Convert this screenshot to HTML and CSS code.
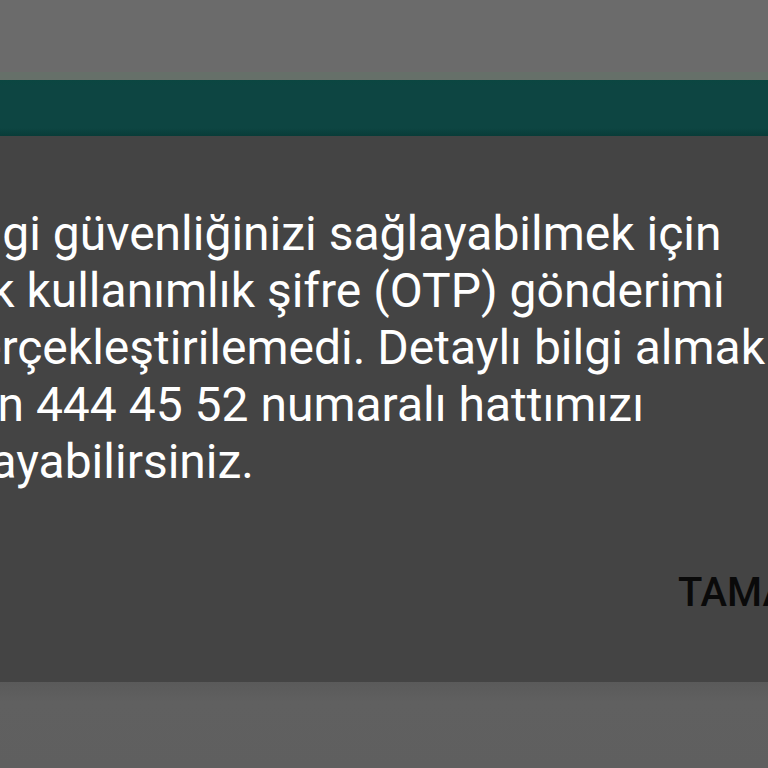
FILE: index.html
```html
<!DOCTYPE html>
<html lang="tr">
<head>
<meta charset="utf-8">
<link rel="stylesheet" href="styles.css">
</head>
<body>
<div class="screen">
  <div class="scrim-top"></div>
  <div class="scrim-strip"></div>
  <div class="dialog">
    <div class="titlebar"></div>
    <div class="content">
      <p class="message">
        <span class="line">Bilgi güvenliğinizi sağlayabilmek için</span>
        <span class="line">tek kullanımlık şifre (OTP) gönderimi</span>
        <span class="line">gerçekleştirilemedi. Detaylı bilgi almak</span>
        <span class="line">için 444 45 52 numaralı hattımızı</span>
        <span class="line">arayabilirsiniz.</span>
      </p>
    </div>
    <div class="actions">
      <span class="btn">TAMAM</span>
    </div>
  </div>
  <div class="scrim-bottom"></div>
</div>
</body>
</html>
```
FILE: styles.css
```css
html, body {
  margin: 0;
  padding: 0;
}
body {
  width: 768px;
  height: 768px;
  overflow: hidden;
  background: #6b6b6b;
  font-family: Roboto, "Noto Sans", sans-serif;
}
.screen {
  width: 768px;
  height: 768px;
  display: flex;
  flex-direction: column;
  overflow: hidden;
}
.scrim-top {
  height: 72px;
  background: #6b6b6b;
  flex: none;
}
.scrim-strip {
  height: 8px;
  background: #667069;
  flex: none;
}
.dialog {
  flex: none;
  height: 602px;
  display: flex;
  flex-direction: column;
  background: #444444;
}
.titlebar {
  height: 56px;
  background: linear-gradient(#0b4641 0, #0d4542 6px, #0d4542 48px, #093c38 56px);
  flex: none;
}
.content {
  padding: 69px 0 0 0;
  margin-left: -51px;
}
.message {
  margin: 0;
  color: #ffffff;
  font-size: 48px;
  line-height: 57px;
  white-space: nowrap;
}
.line {
  display: block;
}
.actions {
  display: flex;
  justify-content: flex-start;
  padding: 79px 0 0 678px;
}
.btn {
  color: #0a0a0a;
  font-size: 40px;
  line-height: 48px;
  font-weight: 500;
  white-space: nowrap;
}
.scrim-bottom {
  flex: 1;
  background: linear-gradient(#5a5a5a, #606060 20px, #5f5f5f);
}
```
